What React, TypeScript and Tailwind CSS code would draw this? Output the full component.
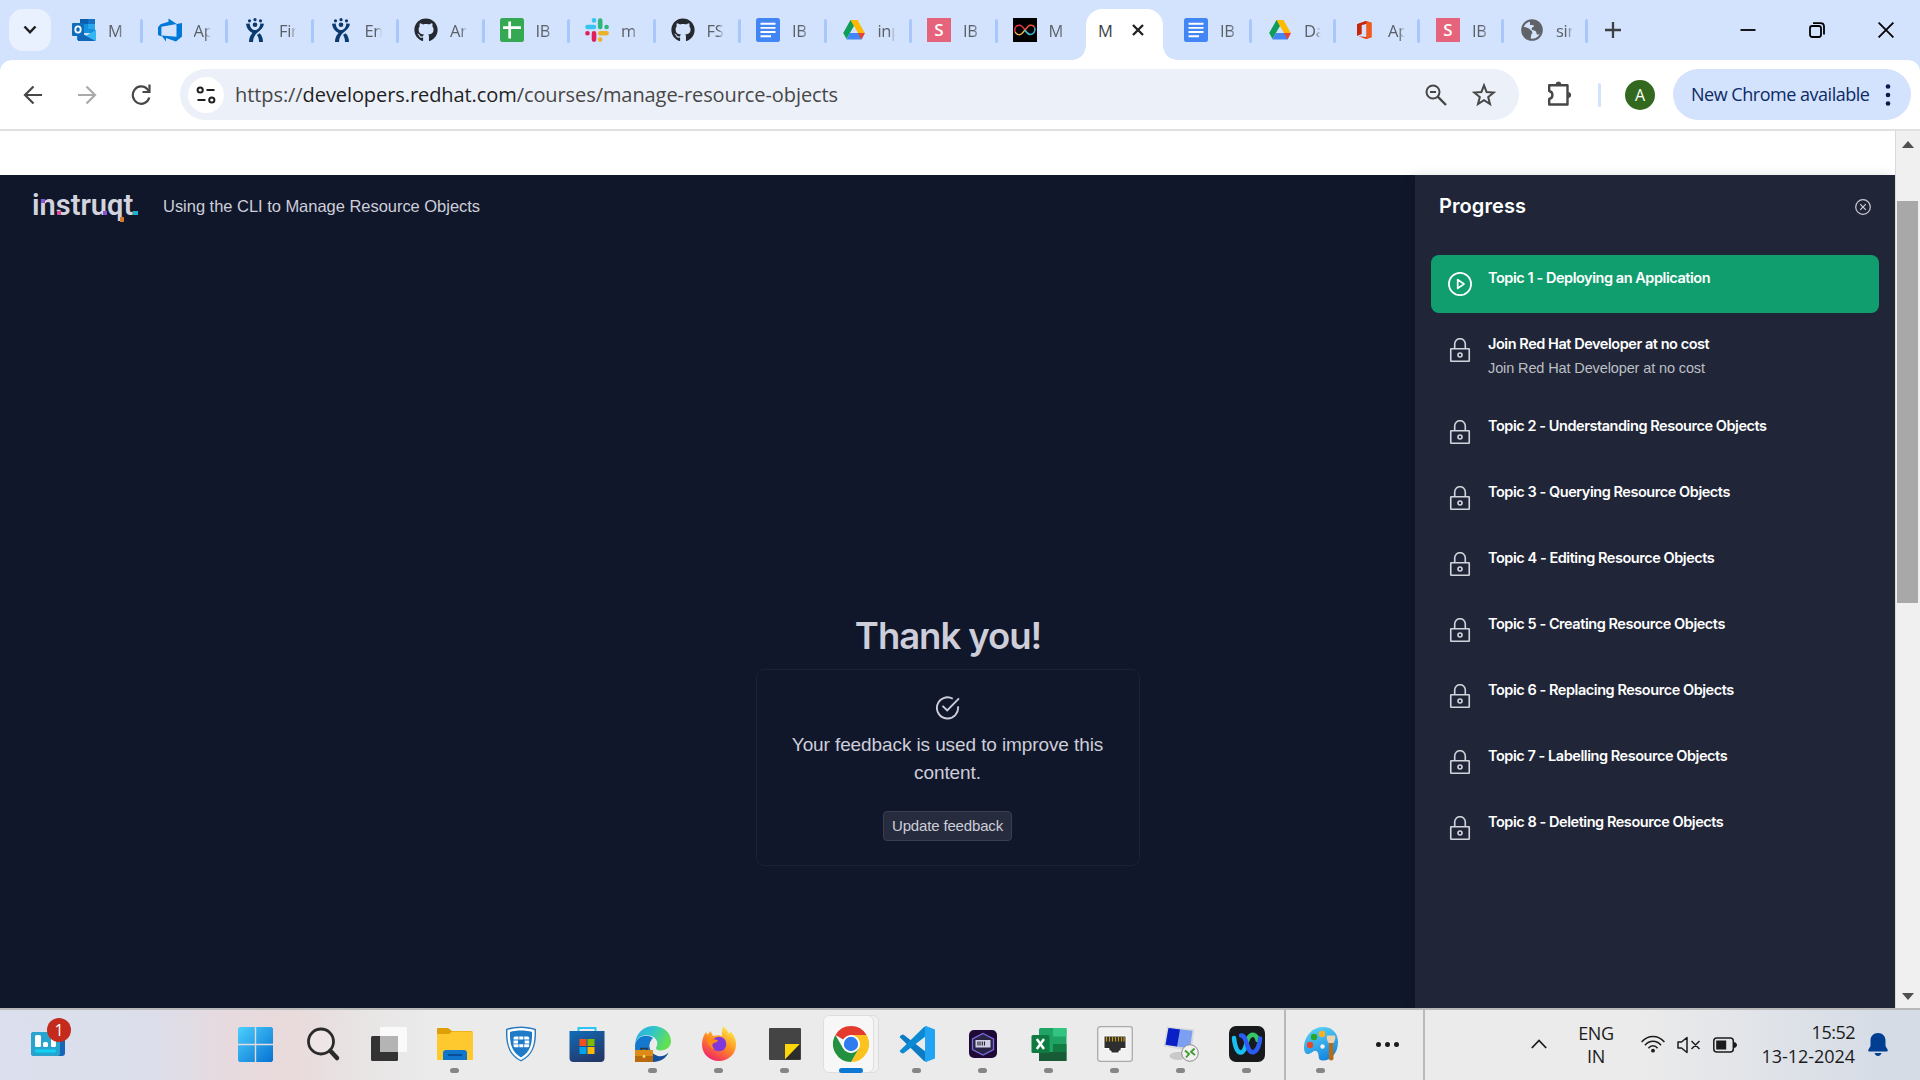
import React from "react";
import { FaGithub } from "react-icons/fa";

type P = { className?: string };

/* ---------- tab favicons (24 × 24) ---------- */

const Outlook = () => (
  <svg viewBox="0 0 24 24" className="size-6">
    <rect x="8" y="1" width="15" height="14" fill="#1490df" />
    <rect x="8" y="1" width="8" height="5" fill="#0a5fae" />
    <rect x="16" y="1" width="7" height="5" fill="#1473c6" />
    <rect x="16" y="6" width="7" height="5" fill="#28a8ea" />
    <path d="M5 13 L14 18 L24 12 V22 H5 Z" fill="#1a8fe0" />
    <path d="M5 13 L24 23 H6 Z" fill="#1066b8" />
    <path d="M24 12 V23 L14 18 Z" fill="#35b8f1" />
    <rect x="0" y="5" width="12" height="13" rx="1" fill="#0f6cbd" />
    <ellipse cx="6" cy="11.500" rx="2.700" ry="3.200" fill="none" stroke="#fff" strokeWidth="1.800" />
  </svg>
);
const Azure = () => (
  <svg viewBox="0 0 24 24" className="size-6">
    <path
      d="M24 5 V18.500 L18 23.500 L8 20 V23.400 L3.500 17.500 L18.500 18.700 V6 Z M18.700 6 L10.500 0.500 V3.800 L2.500 6.200 L0 9.300 V17 L3.400 18.400 V8.800 Z"
      fill="#0078d7"
    />
  </svg>
);
const Jira = () => (
  <svg viewBox="0 0 24 24" className="size-6" fill="#0b3a6f">
    <circle cx="6.500" cy="2.800" r="1.600" />
    <circle cx="12" cy="1.700" r="1.600" />
    <circle cx="17.500" cy="2.800" r="1.600" />
    <path d="M3 5.800 C3.500 10.500 6 13.500 9.500 15 C7 17.500 6 20.500 6 24 H10 C10 20 12 16.500 14.500 14.500 C18 12 20.500 9.500 21 5.800 L17.300 5.500 C17 9.500 15 12 12 12 C9 12 7 9.500 6.700 5.500 Z" />
    <path d="M14 17 C15.500 19 16 21 16 24 H20 C20 20.500 19 17.500 16.600 15.200 Z" />
    <circle cx="12" cy="6.700" r="2.300" />
  </svg>
);
const Sheet = () => (
  <svg viewBox="0 0 24 24" className="size-6">
    <rect width="24" height="24" rx="2.500" fill="#34a853" />
    <path d="M9.700 3.500 V20.500 M3 9.700 H21" stroke="#fff" strokeWidth="2.700" />
  </svg>
);
const Slack = () => (
  <svg viewBox="0 0 24 24" className="size-6">
    <g strokeWidth="4.600" strokeLinecap="round">
      <path d="M9 2.400 V2.500 M2.500 9 H9" stroke="#36c5f0" />
      <path d="M15.200 2.500 V9 M21.600 9 V9" stroke="#2eb67d" />
      <path d="M15.200 15.200 H21.600 M15.200 21.600 V21.600" stroke="#ecb22e" />
      <path d="M9 15.200 V21.600 M2.500 15.200 V15.200" stroke="#e01e5a" />
    </g>
  </svg>
);
const Docs = () => (
  <svg viewBox="0 0 24 24" className="size-6">
    <rect width="24" height="24" rx="2.500" fill="#4285f4" />
    <path d="M4.500 5.800 H19.500 M4.500 9.900 H19.500 M4.500 14 H19.500 M4.500 18.200 H15" stroke="#fff" strokeWidth="1.900" />
  </svg>
);
const Drive = () => (
  <svg viewBox="0 0 24 24" className="size-6">
    <path d="M8.500 2 H15.500 L12 8.200 L4.500 21 L1.200 15 Z" fill="#0f9d58" />
    <path d="M8.500 2 H15.500 L22.800 15 H15.800 Z" fill="#ffba00" />
    <path d="M8 15 H22.800 L19.500 21.500 H4.500 Z" fill="#4285f4" />
    <path d="M15.800 15 H22.800 L19.500 21.500 Z" fill="#ea4335" />
    <path d="M12 8.200 L15.800 15 H8.100 Z" fill="#d3e2fd" />
  </svg>
);
const Square = () => (
  <span className="flex size-6 shrink-0 items-center justify-center bg-[#e6637c] font-['Open_Sans',sans-serif] text-[17px] font-semibold text-white">S</span>
);
const Infinity_ = () => (
  <svg viewBox="0 0 24 24" className="size-6">
    <rect width="24" height="24" fill="#000" />
    <g fill="none" strokeWidth="1.500">
      <path d="M12 12 C9 7 7 7 5.500 7.200 C2.500 7.800 1 11 2.200 14" stroke="#e5343d" />
      <path d="M2.200 14 C3.500 17 7 17.500 9 15.500 L12 12" stroke="#f0b14a" />
      <path d="M12 12 L15 8.500 C17 6.500 20.500 7 21.600 9.500" stroke="#e9593c" />
      <path d="M21.600 9.500 C23 13 20.500 16.800 17 16.500 C15 16.200 13.500 14.500 12 12" stroke="#45b6d9" />
    </g>
  </svg>
);
const Office = () => (
  <svg viewBox="0 0 24 24" className="size-6">
    <path d="M14 3 L19.500 4.700 V19.300 L14 21 L6.500 18.200 L14.500 19 V5.800 L9.500 7 V16 L5 17.800 V6.300 Z" fill="#e43a12" />
    <path d="M14 3 L5 6.300 V17.800 L9.500 16 V7 L14.500 5.800 Z" fill="#c3270d" />
    <path d="M14.500 3.200 L19.500 4.700 V19.300 L14.500 21 Z" fill="#f25a1c" />
  </svg>
);
const Globe = () => (
  <svg viewBox="0 0 24 24" className="size-6">
    <circle cx="12" cy="12" r="9.800" fill="#d3e2fd" stroke="#5f6368" strokeWidth="2" />
    <path d="M3 9 C6 9 9 10 10.500 12 C12.500 13 13 15 11.500 16 C11 18 10.500 20 11 21.500 C5 21 2 15 3 9 Z" fill="#5f6368" />
    <path d="M10 3 C16 2 21 6 21.500 12 C21 16 18 17.500 16.500 16 C17 13.500 15 12.500 12.500 12 C10.500 10.500 12.500 9 14 8.500 C14 6.500 12 7 10 7 Z" fill="#5f6368" />
  </svg>
);
const Hub = () => <FaGithub className="size-6 text-[#24292f]" />;

type TabData = { icon: () => React.ReactElement; label: string };

const leftTabs: TabData[] = [
  { icon: Outlook, label: "M" },
  { icon: Azure, label: "Ap" },
  { icon: Jira, label: "Fin" },
  { icon: Jira, label: "En" },
  { icon: Hub, label: "An" },
  { icon: Sheet, label: "IB" },
  { icon: Slack, label: "m" },
  { icon: Hub, label: "FS" },
  { icon: Docs, label: "IB" },
  { icon: Drive, label: "inp" },
  { icon: Square, label: "IB" },
  { icon: Infinity_, label: "M" },
];
const rightTabs: TabData[] = [
  { icon: Docs, label: "IB" },
  { icon: Drive, label: "Da" },
  { icon: Office, label: "Ap" },
  { icon: Square, label: "IB" },
  { icon: Globe, label: "sin" },
];

const Tab = ({ icon: Icon, label, bar, className }: TabData & { bar: boolean; className: string }) => (
  <div className={`relative flex shrink-0 items-center ${className}`}>
    <Icon />
    <span className="mt-[3px] ml-3 w-[17px] overflow-hidden text-[16.500px] tracking-[-0.300px] whitespace-nowrap text-[#5b6067] [mask-image:linear-gradient(to_right,#000_65%,transparent)]">
      {label}
    </span>
    {bar && <span className="absolute top-[19px] right-[-1px] h-6 w-[3px] rounded-full bg-[#a8c7fa]" />}
  </div>
);

const TabStrip = () => (
  <div className="flex h-[60px] bg-[#d3e2fd] pl-[9px]">
    <button className="mt-[9px] mr-[5px] flex h-[42px] w-[42px] items-center justify-center rounded-[14px] bg-[#eaf1fe]">
      <svg viewBox="0 0 14 10" className="h-[10px] w-[14px]" fill="none" stroke="#1f1f1f" strokeWidth="2.500">
        <path d="M1.500 1.500 L7 7.300 L12.500 1.500" />
      </svg>
    </button>
    {leftTabs.map((t, i) => (
      <Tab key={i} {...t} bar={i < 11} className={i === 11 ? "w-[89.500px] pl-4" : "w-[85.500px] pl-4"} />
    ))}
    <div className="relative mt-[9px] flex w-[77px] shrink-0 items-center justify-between rounded-t-[16px] bg-white pr-[19px] pb-[9px] pl-[12px]">
      <span className="absolute bottom-0 left-[-14px] size-[14px] bg-[radial-gradient(circle_at_0_0,#d3e2fd_13.5px,#fff_14px)]" />
      <span className="absolute right-[-14px] bottom-0 size-[14px] bg-[radial-gradient(circle_at_100%_0,#d3e2fd_13.5px,#fff_14px)]" />
      <span className="mt-[3px] text-[16.500px] text-[#3c3f43]">M</span>
      <svg viewBox="0 0 12 12" className="size-3" stroke="#1f1f1f" strokeWidth="2.300">
        <path d="M1 1 L11 11 M11 1 L1 11" />
      </svg>
    </div>
    {rightTabs.map((t, i) => (
      <Tab key={i} {...t} bar className={i === 0 ? "w-[88px] pl-[21px]" : "w-[84px] pl-[17px]"} />
    ))}
    <svg viewBox="0 0 16 16" className="mt-[22px] ml-[18px] size-4" stroke="#3c4043" strokeWidth="2.300">
      <path d="M8 0 V16 M0 8 H16" />
    </svg>
    <div className="flex flex-1 items-center justify-end gap-[53px] pr-[26px] pb-[1px]">
      <svg viewBox="0 0 16 16" className="size-4" stroke="#000" strokeWidth="1.800">
        <path d="M0.500 8 H15.500" />
      </svg>
      <svg viewBox="0 0 16 16" className="size-4" fill="none" stroke="#000" strokeWidth="1.800">
        <rect x="1" y="4" width="11" height="11" rx="2.200" />
        <path d="M4 1.100 H11.500 Q15 1.100 15 4.500 V12.500" />
      </svg>
      <svg viewBox="0 0 16 16" className="size-4" stroke="#000" strokeWidth="1.800">
        <path d="M0.600 0.600 L15.400 15.400 M15.400 0.600 L0.600 15.400" />
      </svg>
    </div>
  </div>
);

/* ---------- toolbar ---------- */

const Arrow = ({ className = "" }: P) => (
  <svg viewBox="0 0 20 20" className={`size-5 ${className}`} fill="none" stroke="currentColor" strokeWidth="2.200">
    <path d="M19 10 H2.500 M10.500 1.500 L2 10 L10.500 18.500" />
  </svg>
);

const Toolbar = () => (
  <div className="bg-[#d3e2fd]">
    <div className="flex h-[71px] items-center rounded-t-[12px] border-b-2 border-[#dfe0e2] bg-white pl-[23px]">
      <Arrow className="text-[#474747]" />
      <Arrow className="ml-[34px] rotate-180 text-[#aaaaaa]" />
      <svg viewBox="0 0 20 22" className="ml-[34px] h-[22px] w-5" fill="none" stroke="#474747" strokeWidth="2.200">
        <path d="M18.300 13.500 A8.400 8.700 0 1 1 16.400 5.200 L18 7.500" />
        <path d="M18.500 0.500 V8 H11.500" />
      </svg>
      <div className="ml-[29px] flex h-[51px] w-[1339px] items-center rounded-full bg-[#ecf0f9] pr-[23px] pl-2">
        <span className="flex size-9 items-center justify-center rounded-full bg-white">
          <svg viewBox="0 0 20 18" className="h-[18px] w-5" fill="none" stroke="#1f1f1f" strokeWidth="2">
            <circle cx="4.200" cy="4" r="2.600" />
            <path d="M10.500 4 H18.500 M1.500 14 H9.500" />
            <circle cx="15.800" cy="14" r="2.600" />
          </svg>
        </span>
        <span className="ml-[11px] flex-1 text-[20px] tracking-[-0.080px] whitespace-nowrap text-[#474747]">
          https://<span className="text-[#1f1f1f]">developers.redhat.com</span>/courses/manage-resource-objects
        </span>
        <svg viewBox="0 0 22 22" className="size-[22px]" fill="none" stroke="#474747" strokeWidth="2">
          <circle cx="8" cy="8" r="6.500" />
          <path d="M12.700 12.700 L21 21" strokeWidth="2.400" />
          <path d="M5 8 H11" />
        </svg>
        <svg viewBox="0 0 24 24" className="ml-[25px] size-6" fill="none" stroke="#474747" strokeWidth="2">
          <path d="M12 2.300 L14.600 9 L21.700 9.500 L16.200 14 L18 21 L12 17.200 L6 21 L7.800 14 L2.300 9.500 L9.400 9 Z" />
        </svg>
      </div>
      <svg viewBox="0 0 26 26" className="-mt-1 ml-[28px] size-[26px]" stroke="#474747" strokeWidth="2.400" fill="none">
        <path d="M2.200 5.200 H20.500 V24.500 H2.200 V19 C6.500 18 6.500 12 2.200 11 Z" strokeLinejoin="round" />
        <path d="M9 4.500 a2.500 2.500 0 0 1 5 0 Z M21.200 12.500 a2.500 2.500 0 0 1 0 5 Z" fill="#474747" strokeWidth="1" />
      </svg>
      <span className="ml-[25px] h-6 w-[3px] rounded-full bg-[#d3e2fd]" />
      <span className="ml-6 flex size-[30px] items-center justify-center rounded-full bg-[#33691e] text-[16px] text-white">A</span>
      <button className="ml-[18px] flex h-[51px] w-[238px] items-center rounded-full bg-[#d3e2fd] pl-[18px] text-[18px] tracking-[-0.480px] whitespace-nowrap text-[#0b2a66]">
        <span className="flex-1 text-left">New Chrome available</span>
        <svg viewBox="0 0 6 22" className="mr-5 h-[22px] w-[6px]" fill="#041e49">
          <circle cx="3" cy="2.500" r="2.300" />
          <circle cx="3" cy="11" r="2.300" />
          <circle cx="3" cy="19.500" r="2.300" />
        </svg>
      </button>
    </div>
  </div>
);

/* ---------- course player ---------- */

const Lock = () => (
  <svg viewBox="0 0 24 24" className="size-6" fill="none" stroke="#d3d5dc" strokeWidth="1.600">
    <rect x="2.750" y="10.700" width="18.500" height="12.500" rx="0.500" />
    <path d="M6.700 10.700 V6 A5.300 5.300 0 0 1 17.300 6 V10.700" />
    <circle cx="12" cy="17" r="2" />
  </svg>
);
const Play = () => (
  <svg viewBox="0 0 24 24" className="size-6" fill="none" stroke="#fff" strokeWidth="1.700">
    <circle cx="12" cy="12" r="11.100" />
    <path d="M9.700 7.600 L16 12 L9.700 16.400 Z" strokeLinejoin="round" />
  </svg>
);

const topics: { title: string; sub?: string }[] = [
  { title: "Topic 1 - Deploying an Application" },
  { title: "Join Red Hat Developer at no cost", sub: "Join Red Hat Developer at no cost" },
  { title: "Topic 2 - Understanding Resource Objects" },
  { title: "Topic 3 - Querying Resource Objects" },
  { title: "Topic 4 - Editing Resource Objects" },
  { title: "Topic 5 - Creating Resource Objects" },
  { title: "Topic 6 - Replacing Resource Objects" },
  { title: "Topic 7 - Labelling Resource Objects" },
  { title: "Topic 8 - Deleting Resource Objects" },
];

const Progress = () => (
  <aside className="w-[480px] shrink-0 bg-[#202638] shadow-[-4px_0_10px_rgba(0,0,0,0.12)]">
    <div className="flex h-[62px] items-center justify-between pr-6 pl-6">
      <h2 className="font-['Inter',sans-serif] text-[20px] font-semibold tracking-[0.080px] text-white">Progress</h2>
      <svg viewBox="0 0 16 16" className="mt-[2px] size-4" fill="none" stroke="#cdced6" strokeWidth="1.200">
        <circle cx="8" cy="8" r="7.300" />
        <path d="M5.200 5.200 L10.800 10.800 M10.800 5.200 L5.200 10.800" />
      </svg>
    </div>
    <ul className="mt-[18px] flex flex-col gap-2 px-4">
      {topics.map((t, i) => (
        <li key={i} className={`flex rounded-lg pl-[17px] ${t.sub ? "h-[74px]" : "h-[58px]"} ${i === 0 ? "bg-[#119e6e]" : ""}`}>
          <span className="mt-[17px]">{i === 0 ? <Play /> : <Lock />}</span>
          <div className="mt-[11px] ml-4">
            <p className="font-['Inter',sans-serif] text-[14.500px] leading-6 font-semibold tracking-[-0.450px] text-white">{t.title}</p>
            {t.sub && <p className="font-['Liberation_Sans',sans-serif] text-[14.500px] leading-6 tracking-[-0.120px] text-[#bdbfc5]">{t.sub}</p>}
          </div>
        </li>
      ))}
    </ul>
  </aside>
);

const Logo = () => (
  <div className="relative h-[30px] w-[108px] font-['Roboto',sans-serif] text-[29px] leading-[28px] font-semibold text-[#d3d3de]">
    instruqt
    <span className="absolute top-[8px] left-[9px] size-1 bg-[#8a4fd0]" />
    <span className="absolute top-[20px] left-[25px] size-1 bg-[#d9479b]" />
    <span className="absolute top-[20px] left-[71px] size-1 bg-[#8a4fd0]" />
    <span className="absolute top-[26px] left-[88px] h-[5px] w-1 bg-[#d9772b]" />
    <span className="absolute top-[20px] left-[101px] h-1 w-[5px] bg-[#12b5d4]" />
  </div>
);

const Player = () => (
  <main className="flex min-w-0 flex-1 flex-col bg-[#11172b] font-['Liberation_Sans',sans-serif] text-[#cdced9]">
    <header className="flex h-[62px] items-center pl-8">
      <Logo />
      <span className="ml-[23px] text-[16.500px] tracking-[-0.030px] whitespace-nowrap">Using the CLI to Manage Resource Objects</span>
    </header>
    <section className="mt-[374px] ml-[756px] flex w-[384px] flex-col items-center">
      <h1 className="font-['Inter',sans-serif] text-[36.500px] leading-[50px] font-semibold tracking-[-1.050px] whitespace-nowrap">Thank you!</h1>
      <div className="mt-2 flex h-[197px] w-full flex-col items-center rounded-lg border border-[#1c2135] pr-[1px]">
        <svg viewBox="0 0 24 24" className="mt-[26px] size-6" fill="none" stroke="#cdced9" strokeWidth="1.900">
          <path d="M16.800 2.700 A10.600 10.600 0 1 0 22 10.300" />
          <path d="M6.500 9.800 L11.200 14.500 L23 2.300" />
        </svg>
        <p className="mt-[11px] w-[340px] text-center text-[19px] leading-7 tracking-[-0.100px]">Your feedback is used to improve this content.</p>
        <button className="mt-[24px] h-[30px] w-[129px] rounded border border-[#3a3e50] bg-[#262b3d] text-[15px] leading-7 tracking-[-0.160px]">Update feedback</button>
      </div>
    </section>
  </main>
);

const Scrollbar = () => (
  <div className="flex w-[25px] shrink-0 flex-col items-center border-l border-[#d9d9da] bg-[#f0f0f0]">
    <svg viewBox="0 0 12 7" className="mt-[10px] h-[7px] w-3" fill="#505050">
      <path d="M0 7 L6 0 L12 7 Z" />
    </svg>
    <div className="mt-[53px] mr-[1px] h-[402px] w-[21px] bg-[#a8a8a8]" />
    <svg viewBox="0 0 12 7" className="mt-auto mb-[8px] h-[7px] w-3" fill="#505050">
      <path d="M0 0 L6 7 L12 0 Z" />
    </svg>
  </div>
);

/* ---------- taskbar ---------- */

const Widgets = () => (
  <div className="relative ml-[31px] h-[38px] w-[42px] pt-[14px]">
    <svg viewBox="0 0 34 24" className="h-6 w-[34px]">
      <rect width="34" height="24" rx="3" fill="#1466b8" />
      <rect width="29" height="24" rx="3" fill="#28a5cf" />
      <rect x="4" y="3" width="6" height="12" rx="1.500" fill="#fff" />
      <rect x="12" y="10" width="5" height="5" rx="1.500" fill="#fff" />
      <rect x="20" y="4" width="5" height="11" rx="1.500" fill="#fff" />
      <rect x="4" y="17.500" width="21" height="3" rx="1.500" fill="#0fd3f5" />
    </svg>
    <span className="absolute top-0 left-[16px] flex size-6 items-center justify-center rounded-full bg-[#c42b1c] text-[16px] text-white">1</span>
  </div>
);

const Windows = () => (
  <svg viewBox="0 0 36 36" className="mt-[1px] mr-[3px] size-[35px]">
    <defs>
      <linearGradient id="win" x1="0" y1="0" x2="1" y2="1">
        <stop offset="0" stopColor="#4dd0fd" />
        <stop offset="1" stopColor="#0572d2" />
      </linearGradient>
    </defs>
    <path d="M1.500 0 H17.300 V17.300 H0 V1.500 Z M18.700 0 H34.500 L36 1.500 V17.300 H18.700 Z M0 18.700 H17.300 V36 H1.500 L0 34.500 Z M18.700 18.700 H36 V34.500 L34.500 36 H18.700 Z" fill="url(#win)" />
  </svg>
);
const Search = () => (
  <svg viewBox="0 0 36 36" className="size-9" fill="none" stroke="#2b2b2b">
    <circle cx="16" cy="15.500" r="12.500" strokeWidth="2.800" fill="#f3eeee" fillOpacity="0.500" />
    <path d="M25.500 25 L32 32" strokeWidth="4.500" strokeLinecap="round" />
  </svg>
);
const TaskView = () => (
  <svg viewBox="0 0 36 36" className="size-9">
    <rect x="0" y="10" width="27" height="25" rx="1.500" fill="#333" />
    <rect x="9" y="1" width="27" height="25" rx="1.500" fill="#fafafa" />
    <rect x="9" y="10" width="18" height="16" fill="#b4b4b4" />
  </svg>
);
const Explorer = () => (
  <svg viewBox="0 0 36 36" className="size-9">
    <path d="M0 3 Q0 2 1 2 H11 L15 5 H35 V10 H0 Z" fill="#dfa006" />
    <path d="M0 8 H12 L15 5.500 H36 V33 Q36 34 35 34 H1 Q0 34 0 33 Z" fill="#fdc92f" />
    <path d="M6 34 V27 Q6 24 9 24 H27 Q30 24 30 27 V34 Z" fill="#0f76cc" />
    <path d="M11 29 H25" stroke="#0a4f96" strokeWidth="2" />
  </svg>
);
const Shield = () => (
  <svg viewBox="0 0 36 36" className="size-9">
    <path d="M18 0.500 C23 0.500 29 1.500 33 3 C33.500 18 31 29 18 35.500 C5 29 2.500 18 3 3 C7 1.500 13 0.500 18 0.500 Z" fill="#2a7ac0" />
    <path d="M18 2 C23 2 28 3 31.500 4 C32 18 29.500 28 18 34 C6.500 28 4 18 4.500 4 C8 3 13 2 18 2 Z" fill="#fff" />
    <path d="M18 4.500 C22 4.500 26 5 29 6 C29.500 18 27 26 18 31.500 C9 26 6.500 18 7 6 C10 5 14 4.500 18 4.500 Z" fill="#1f7bc8" />
    <path d="M12 10.500 h3.500 v3 h-5 v-1.500 q0 -1.500 1.500 -1.500 Z M16.300 10.500 h4 v3 h-4 Z M21.200 10.500 h3.500 q1.500 0 1.500 1.500 v1.500 h-5 Z M10.500 14.400 h4.500 v3 h-4.500 Z M21.700 14.400 h4.500 v3 h-4.500 Z M10.500 18.300 h5 v3 h-3.500 q-1.500 0 -1.500 -1.500 Z M16.300 18.300 h4 v3 h-4 Z M21.200 18.300 h5 v1.500 q0 1.500 -1.500 1.500 h-3.500 Z" fill="#fff" />
  </svg>
);
const Store = () => (
  <svg viewBox="0 0 36 36" className="mr-[1px] size-9">
    <defs>
      <linearGradient id="store" x1="0" y1="0" x2="0.500" y2="1">
        <stop offset="0" stopColor="#0f6cb8" />
        <stop offset="1" stopColor="#24396b" />
      </linearGradient>
    </defs>
    <path d="M9.500 7 V2 H26.500 V7" fill="none" stroke="#2cc3f5" strokeWidth="2" />
    <path d="M0.500 5 H35.500 V32 Q35.500 36 31.500 36 H4.500 Q0.500 36 0.500 32 Z" fill="url(#store)" />
    <rect x="10.500" y="13" width="7" height="7" fill="#f25022" />
    <rect x="18.500" y="13" width="7" height="7" fill="#7fba00" />
    <rect x="10.500" y="21" width="7" height="7" fill="#00a4ef" />
    <rect x="18.500" y="21" width="7" height="7" fill="#ffb900" />
  </svg>
);
const Edge = () => (
  <svg viewBox="0 0 36 36" className="size-9">
    <defs>
      <linearGradient id="edge" x1="0" y1="0" x2="1" y2="0.400">
        <stop offset="0" stopColor="#2ea9ec" />
        <stop offset="0.500" stopColor="#30c5c9" />
        <stop offset="1" stopColor="#63e052" />
      </linearGradient>
    </defs>
    <path d="M18 13 C12 16 13 27 23 30 C27 31 31 29 33.500 26.500 C31 32.500 25 36 18 36 C9 36 2 30 0 22 Z" fill="#134f9c" />
    <path d="M0 20 C0 11 11 7 18 12 C13 15 13 24 17 29 L12 35 C4 32 0 26 0 20 Z" fill="#1578cf" />
    <path d="M0.200 17 C1 7 9 0 18.500 0 C28 0 36 6.500 36 15 C36 21 31 24.500 26 24.500 C22 24.500 20.500 23 21 21.500 C23 19.500 23 14 19 11.500 C13 7.500 3 9 0.200 17 Z" fill="url(#edge)" />
    <rect x="0" y="24" width="18" height="12" fill="#b96a0c" />
    <rect x="0" y="24" width="18" height="6" fill="#dd8b17" />
    <path d="M6 24 V22.500 H12 V24" fill="none" stroke="#333" strokeWidth="1.500" />
    <circle cx="9" cy="30.500" r="1.400" fill="#ffdf5c" />
  </svg>
);
const Firefox = () => (
  <svg viewBox="0 0 36 36" className="size-9">
    <defs>
      <linearGradient id="ff" x1="0.800" y1="0" x2="0.200" y2="1">
        <stop offset="0" stopColor="#fff04a" />
        <stop offset="0.450" stopColor="#ff9422" />
        <stop offset="1" stopColor="#f0196e" />
      </linearGradient>
    </defs>
    <path d="M22.500 0.500 C25 3 27 5 28 8 L29.500 5.500 C33.500 9 35 14 35 18.500 C35 28 27.500 35 18 35 C8.500 35 1 28 1 18.500 C1 13.500 2.500 9.500 5 6 L6.500 9 L9.500 5 L12 10 C15 9 19 9 21 10 C20.500 6.500 21 3 22.500 0.500 Z" fill="url(#ff)" />
    <circle cx="18" cy="18" r="7.300" fill="#8038dc" />
    <path d="M6 11 C9 12 11 13 17 14 C16 17 13 16.500 11.500 18 C11 20 12 22 13.500 23.500 C8 22 6 16 6 11 Z" fill="#ff8a16" />
  </svg>
);
const Sticky = () => (
  <svg viewBox="0 0 36 36" className="size-9">
    <rect x="2" y="2" width="32" height="32" rx="1" fill="#444" />
    <path d="M18 18 H33 L18 33.500 Z" fill="#ffd60a" />
    <path d="M33 18 L18 33.500 H33 Z" fill="#2c2c2c" />
  </svg>
);
const Chrome = () => (
  <svg viewBox="0 0 36 36" className="size-9">
    <path d="M18 0 A18 18 0 0 1 33.600 9 H18 L10.200 13.500 L2.400 9 A18 18 0 0 1 18 0 Z" fill="#e33b2e" />
    <path d="M33.600 9 A18 18 0 0 1 18 36 L25.800 22.500 L27 18 L18 9 Z" fill="#fcc31e" />
    <path d="M2.400 9 L10.200 22.500 L18 27 L25.800 22.500 L18 36 A18 18 0 0 1 2.400 9 Z" fill="#23913f" />
    <circle cx="18" cy="18" r="9" fill="#fff" />
    <circle cx="18" cy="18" r="7.200" fill="#2f7bf0" />
  </svg>
);
const VSCode = () => (
  <svg viewBox="0 0 36 36" className="size-9">
    <path d="M1 11.500 Q0.500 10.700 1.200 10 L3 8.800 Q4 8.300 5 9 L27 26 V35.500 L25 35 Z" fill="#0b7cc4" />
    <path d="M1 24.500 Q0.500 25.300 1.200 26 L3 27.200 Q4 27.700 5 27 L27 10 V0.500 L25 1 Z" fill="#0b8ad4" />
    <path d="M26 0.500 L27 0 L36 3.500 V32.500 L27 36 L26 35.500 Z" fill="#25a3f3" />
  </svg>
);
const Barcode = () => (
  <svg viewBox="0 0 36 36" className="size-9">
    <rect x="4" y="4" width="28" height="28" rx="5" fill="#1d0b36" />
    <path d="M18 7.500 L28.500 13 V23.500 L18 29 L7.500 23.500 V13 Z" fill="#292443" stroke="#7a6be0" strokeWidth="1.300" />
    <rect x="10.500" y="14" width="15" height="7.500" fill="#cfcee6" />
    <path d="M13 15.500 V19.500 M15 15.500 V19.500 M17.300 15.500 V19.500 M19.500 15.500 V19.500" stroke="#222" strokeWidth="1.100" />
  </svg>
);
const Excel = () => (
  <svg viewBox="0 0 36 36" className="mr-[1px] size-9">
    <rect x="8" y="2" width="27.500" height="33" rx="1.500" fill="#21a366" />
    <rect x="22" y="2" width="13.500" height="8.500" fill="#33c481" />
    <rect x="22" y="18" width="13.500" height="8" fill="#107c41" />
    <rect x="8" y="26" width="27.500" height="9" fill="#185c37" />
    <rect x="0.500" y="9" width="18" height="18" rx="1.500" fill="#0f7b40" />
    <path d="M5.800 13 L13 23 M13 13 L5.800 23" stroke="#fff" strokeWidth="2.500" />
  </svg>
);
const Ethernet = () => (
  <svg viewBox="0 0 36 36" className="size-9">
    <rect x="0.700" y="0.700" width="34.600" height="34.600" rx="2.500" fill="#f1f1f1" stroke="#aaa" strokeWidth="1.300" />
    <path d="M7 10 H29 V22.500 H24 V25 H22 V27 H14 V25 H12 V22.500 H7 Z" fill="#2e2e2e" stroke="#fff" strokeWidth="1" />
    <path d="M9.500 11 V15.500 M12.500 11 V15.500 M15.500 11 V15.500 M18.500 11 V15.500 M21.500 11 V15.500 M24.500 11 V15.500 M27 11 V15.500" stroke="#c29a1c" strokeWidth="1.200" />
  </svg>
);
const Remote = () => (
  <svg viewBox="0 0 36 36" className="size-9">
    <ellipse cx="15" cy="30" rx="8.500" ry="4" fill="#c9c9c9" />
    <path d="M4 0.500 L31.500 3.500 L28.500 25 L0.500 20.500 Z" fill="#d9d9d9" />
    <path d="M5.500 2 L29.500 4.800 L27 22.500 L2.500 18.800 Z" fill="#7d9ff2" />
    <path d="M5.500 2 L17 3.400 L14 20.500 L2.500 18.800 Z" fill="#0a1fc4" />
    <circle cx="27" cy="27" r="8.300" fill="#f1f1f1" stroke="#8e8e8e" />
    <path d="M22 24.500 L26 28 L23 31.500 M31.500 22.500 L28 26 L32 29" fill="none" stroke="#3f9c2f" strokeWidth="1.900" />
  </svg>
);
const Webex = () => (
  <svg viewBox="0 0 36 36" className="size-9">
    <rect width="36" height="36" rx="7" fill="#17191c" />
    <g fill="none" strokeWidth="4.500" strokeLinecap="round">
      <path d="M5 12 C6 22 9 27 12 26.500 C15 26 17 20 18 15" stroke="#18c0f0" />
      <path d="M18 15 C19.500 10 23 7.500 26 9.500 C28 11 28.500 13 28.500 14" stroke="#35c46a" />
      <path d="M12 9.500 C16 9 17 16 18.500 20 C20 25 22 27 25 26 C29 24.500 31 16 31 12.500" stroke="#2a5cf5" />
    </g>
  </svg>
);
const Paint = () => (
  <svg viewBox="0 0 36 36" className="size-9">
    <defs>
      <linearGradient id="paint" x1="0.200" y1="0" x2="0.600" y2="1">
        <stop offset="0" stopColor="#5bd4fa" />
        <stop offset="1" stopColor="#1585dc" />
      </linearGradient>
    </defs>
    <path d="M20 1 C29 1 35 7 35 16 C35 27 28 35 19 34.500 C14 34 17 29 14 25.500 C11 22.500 8 29 4 28 C1 27 1 23 1 20 C2 9 10 1 20 1 Z" fill="url(#paint)" />
    <circle cx="19" cy="8" r="3.200" fill="#fbb21c" />
    <circle cx="11" cy="11" r="3.200" fill="#2ba52e" />
    <circle cx="7" cy="19" r="3.200" fill="#e6492a" />
    <circle cx="19.500" cy="20.500" r="2.200" fill="#f2f2f2" />
    <path d="M26 17 H30 L30.500 33 Q28 36 26 33 Z" fill="#b96a12" />
    <path d="M24 9.500 H32 Q33 13 30.500 17 H25.500 Q23 13 24 9.500 Z" fill="#f0d3ae" />
  </svg>
);

type AppData = { icon: () => React.ReactElement; open?: boolean; active?: boolean };

const apps: AppData[] = [
  { icon: Windows },
  { icon: Search },
  { icon: TaskView },
  { icon: Explorer, open: true },
  { icon: Shield },
  { icon: Store },
  { icon: Edge, open: true },
  { icon: Firefox, open: true },
  { icon: Sticky, open: true },
  { icon: Chrome, active: true },
  { icon: VSCode, open: true },
  { icon: Barcode, open: true },
  { icon: Excel, open: true },
  { icon: Ethernet, open: true },
  { icon: Remote, open: true },
  { icon: Webex, open: true },
];

const AppButton = ({ icon: Icon, open, active }: AppData) => (
  <div className="relative flex h-[70px] w-[66px] shrink-0 justify-center pt-4">
    {active && (
      <>
        <span className="absolute top-[5px] left-[10px] h-[58px] w-[51px] rounded-md border border-[#dcdcdc] bg-[#f1f1f1]" />
        <span className="absolute top-[5px] left-[5px] h-[58px] w-[51px] rounded-md border border-[#dedede] bg-[#f7f7f7]" />
      </>
    )}
    <span className="relative">
      <Icon />
    </span>
    {open && <span className="absolute top-[58px] left-[28px] h-[5px] w-[9px] rounded-full bg-[#868686]" />}
    {active && <span className="absolute top-[58px] left-[21px] h-[5px] w-6 rounded-full bg-[#0b78d4]" />}
  </div>
);

const Taskbar = () => (
  <div className="flex h-[72px] shrink-0 border-t-2 border-[#b9b8b9] bg-[linear-gradient(90deg,#dce0ee_0px,#dbdeea_150px,#e6dadf_220px,#e9dadb_290px,#e8e4e4_360px,#ebebeb_430px,#ebebeb_1640px,#d6dce6_1880px)]">
    <div className="w-[224px] shrink-0 pt-2">
      <Widgets />
    </div>
    {apps.map((a, i) => (
      <AppButton key={i} {...a} />
    ))}
    <div className="ml-1 flex w-[141px] shrink-0 border-x-2 border-[#b9b9b9]">
      <div className="ml-[2px]">
        <AppButton icon={Paint} open />
      </div>
      <div className="flex flex-1 items-center justify-center gap-[4px] pr-[2px] pb-[2px]">
        <span className="size-[5px] rounded-full bg-[#1a1a1a]" />
        <span className="size-[5px] rounded-full bg-[#1a1a1a]" />
        <span className="size-[5px] rounded-full bg-[#1a1a1a]" />
      </div>
    </div>
    <div className="flex flex-1 items-center pl-[106px] text-[18px] text-[#1b1b1b]">
      <svg viewBox="0 0 16 10" className="mb-[3px] h-[10px] w-4" fill="none" stroke="#1b1b1b" strokeWidth="1.800">
        <path d="M0.800 9 L8 1.500 L15.200 9" />
      </svg>
      <div className="ml-[31px] flex w-9 flex-col items-center text-center leading-[23px] tracking-[-0.400px]">
        <span>ENG</span>
        <span>IN</span>
      </div>
      <svg viewBox="0 0 24 18" className="mb-[2px] ml-[27px] h-[18px] w-6" fill="none" stroke="#1b1b1b" strokeWidth="1.500">
        <path d="M0.600 7 C7 -0.500 17 -0.500 23.400 7 M4 10.200 C8.500 5 15.500 5 20 10.200 M7.400 13.200 C10 10 14 10 16.600 13.200" />
        <circle cx="12" cy="15.700" r="1.900" fill="#1b1b1b" stroke="none" />
      </svg>
      <svg viewBox="0 0 24 18" className="mb-[1px] ml-3 h-[18px] w-6" fill="none" stroke="#1b1b1b" strokeWidth="1.500">
        <path d="M1 6 H4.500 L10 1.500 V16.500 L4.500 12 H1 Z M14.500 5 L22.500 13 M22.500 5 L14.500 13" strokeLinejoin="round" />
      </svg>
      <svg viewBox="0 0 24 16" className="mb-[1px] ml-3 h-4 w-6" fill="none" stroke="#1b1b1b" strokeWidth="1.500">
        <rect x="0.800" y="1" width="19.500" height="14" rx="3" />
        <rect x="3.200" y="3.500" width="10" height="9" fill="#1b1b1b" stroke="none" />
        <path d="M21.500 5.500 V10.500 Q23.500 10 23.500 8 Q23.500 6 21.500 5.500 Z" fill="#1b1b1b" strokeWidth="1" />
      </svg>
      <div className="mb-[3px] ml-auto flex flex-col items-end text-right leading-6">
        <span className="tracking-[-0.500px]">15:52</span>
        <span className="tracking-[-0.050px]">13-12-2024</span>
      </div>
      <svg viewBox="0 0 20 23" className="mb-[1px] mr-8 ml-[13px] h-[23px] w-5" fill="#003e92">
        <path d="M10 0 C14.500 0 17.500 3.200 17.500 7.500 V13 L19.800 17 Q20 18.500 18.500 18.500 H1.500 Q0 18.500 0.200 17 L2.500 13 V7.500 C2.500 3.200 5.500 0 10 0 Z M6.500 20 H13.500 Q12.500 23 10 23 Q7.500 23 6.500 20 Z" />
      </svg>
    </div>
  </div>
);

export default function App() {
  return (
    <div className="flex h-[1080px] w-[1920px] flex-col overflow-hidden bg-white font-['Open_Sans',sans-serif]">
      <TabStrip />
      <Toolbar />
      <div className="flex min-h-0 flex-1">
        <div className="flex min-w-0 flex-1 flex-col pt-11">
          <div className="flex min-h-0 flex-1">
            <Player />
            <Progress />
          </div>
        </div>
        <Scrollbar />
      </div>
      <Taskbar />
    </div>
  );
}
